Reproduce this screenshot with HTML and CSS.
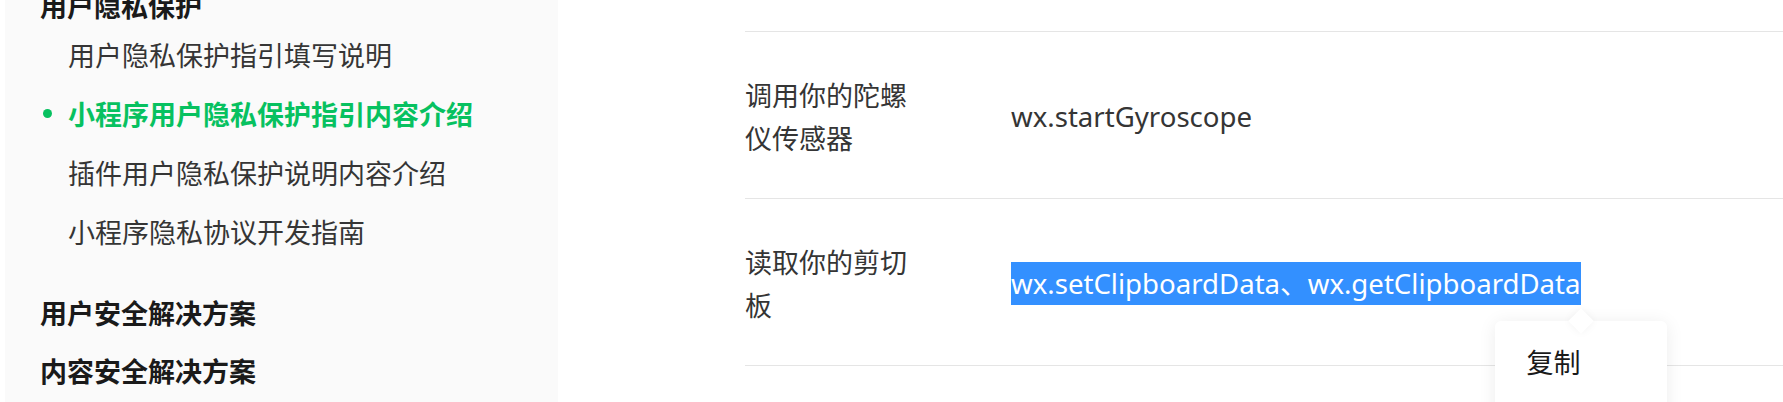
FILE: index.html
```html
<!DOCTYPE html>
<html lang="zh-CN">
<head>
  <meta charset="UTF-8">
  <title>小程序用户隐私保护指引内容介绍</title>
  <link rel="stylesheet" href="styles.css">
</head>
<body>
<div class="page">
  <aside class="sidebar">
    <nav class="nav">
      <div class="group">
        <div class="group-title">用户隐私保护</div>
        <ul class="sub-list">
          <li class="sub-item">用户隐私保护指引填写说明</li>
          <li class="sub-item active">小程序用户隐私保护指引内容介绍</li>
          <li class="sub-item">插件用户隐私保护说明内容介绍</li>
          <li class="sub-item">小程序隐私协议开发指南</li>
        </ul>
      </div>
      <div class="group">
        <div class="group-title">用户安全解决方案</div>
      </div>
      <div class="group">
        <div class="group-title">内容安全解决方案</div>
      </div>
    </nav>
  </aside>

  <main class="content">
    <div class="api-table">
      <div class="api-row">
        <div class="api-name">调用你的陀螺仪传感器</div>
        <div class="api-value">wx.startGyroscope</div>
      </div>
      <div class="api-row">
        <div class="api-name">读取你的剪切板</div>
        <div class="api-value">
          <span class="selected">wx.setClipboardData、wx.getClipboardData
            <span class="copy-menu">
              <span class="copy-item">复制</span>
            </span>
          </span>
        </div>
      </div>
    </div>
  </main>
</div>
</body>
</html>
```

FILE: styles.css
```css
body {
  margin: 0;
  background: #fff;
  font-family: "Noto Sans", "Noto Sans CJK SC", sans-serif;
  color: #353535;
  overflow: hidden;
}

.page {
  display: flex;
  align-items: flex-start;
  padding-left: 5px;
  height: 402px;
}

/* left menu */
.sidebar {
  width: 553px;
  flex-shrink: 0;
  height: 402px;
  background-color: #fafafa;
  overflow: hidden;
}

.nav {
  margin-top: -18px;
}

.group {
  margin-bottom: 11px;
}

.group-title {
  padding-left: 35px;
  font-family: "Noto Sans CJK SC", sans-serif;
  font-size: 27px;
  font-weight: bold;
  line-height: 47px;
  color: #1a1a1a;
}

.sub-list {
  list-style: none;
  margin: -4px 0 0 0;
  padding: 0 0 17px 0;
}

.sub-item {
  display: flex;
  align-items: center;
  padding-left: 38px;
  font-family: "Noto Sans CJK SC", sans-serif;
  font-size: 27px;
  line-height: 59px;
  color: #353535;
}

.sub-item::before {
  content: "";
  width: 9px;
  height: 9px;
  border-radius: 50%;
  margin-right: 16px;
  flex-shrink: 0;
}

.sub-item.active {
  color: #07c160;
  font-weight: bold;
}

.sub-item.active::before {
  background-color: #07c160;
}

/* api table */
.content {
  flex: 1;
  padding-top: 31px;
  padding-left: 187px;
}

.api-table {
  border-bottom: 1px solid #e5e5e5;
}

.api-row {
  display: grid;
  grid-template-columns: 266px 1fr;
  align-items: center;
  border-top: 1px solid #e5e5e5;
  padding: 41px 0 39px 0;
  font-size: 27px;
  line-height: 43px;
}

.api-name {
  padding-right: 90px;
  font-family: "Noto Sans CJK SC", sans-serif;
}

.api-value {
  font-size: 27.6px;
  color: #353535;
}

.selected {
  position: relative;
  display: inline-block;
  line-height: 43px;
  background-color: #3390ff;
  color: #fff;
}

/* context menu */
.copy-menu {
  position: absolute;
  top: calc(100% + 16px);
  left: 100%;
  transform: translateX(-50%);
  width: 172px;
  height: 120px;
  background: #fff;
  border-radius: 6px;
  box-shadow: 0 2px 18px rgba(0, 0, 0, 0.08);
  line-height: 43px;
  text-align: left;
}

.copy-menu::before {
  content: "";
  position: absolute;
  top: -9px;
  left: 77px;
  width: 18px;
  height: 18px;
  background: #fff;
  transform: rotate(45deg);
  box-shadow: 0 0 8px rgba(0, 0, 0, 0.05);
}

.copy-item {
  position: relative;
  display: block;
  padding: 19px 0 0 32px;
  font-family: "Noto Sans CJK SC", sans-serif;
  font-size: 27px;
  color: #1a1a1a;
}
```
